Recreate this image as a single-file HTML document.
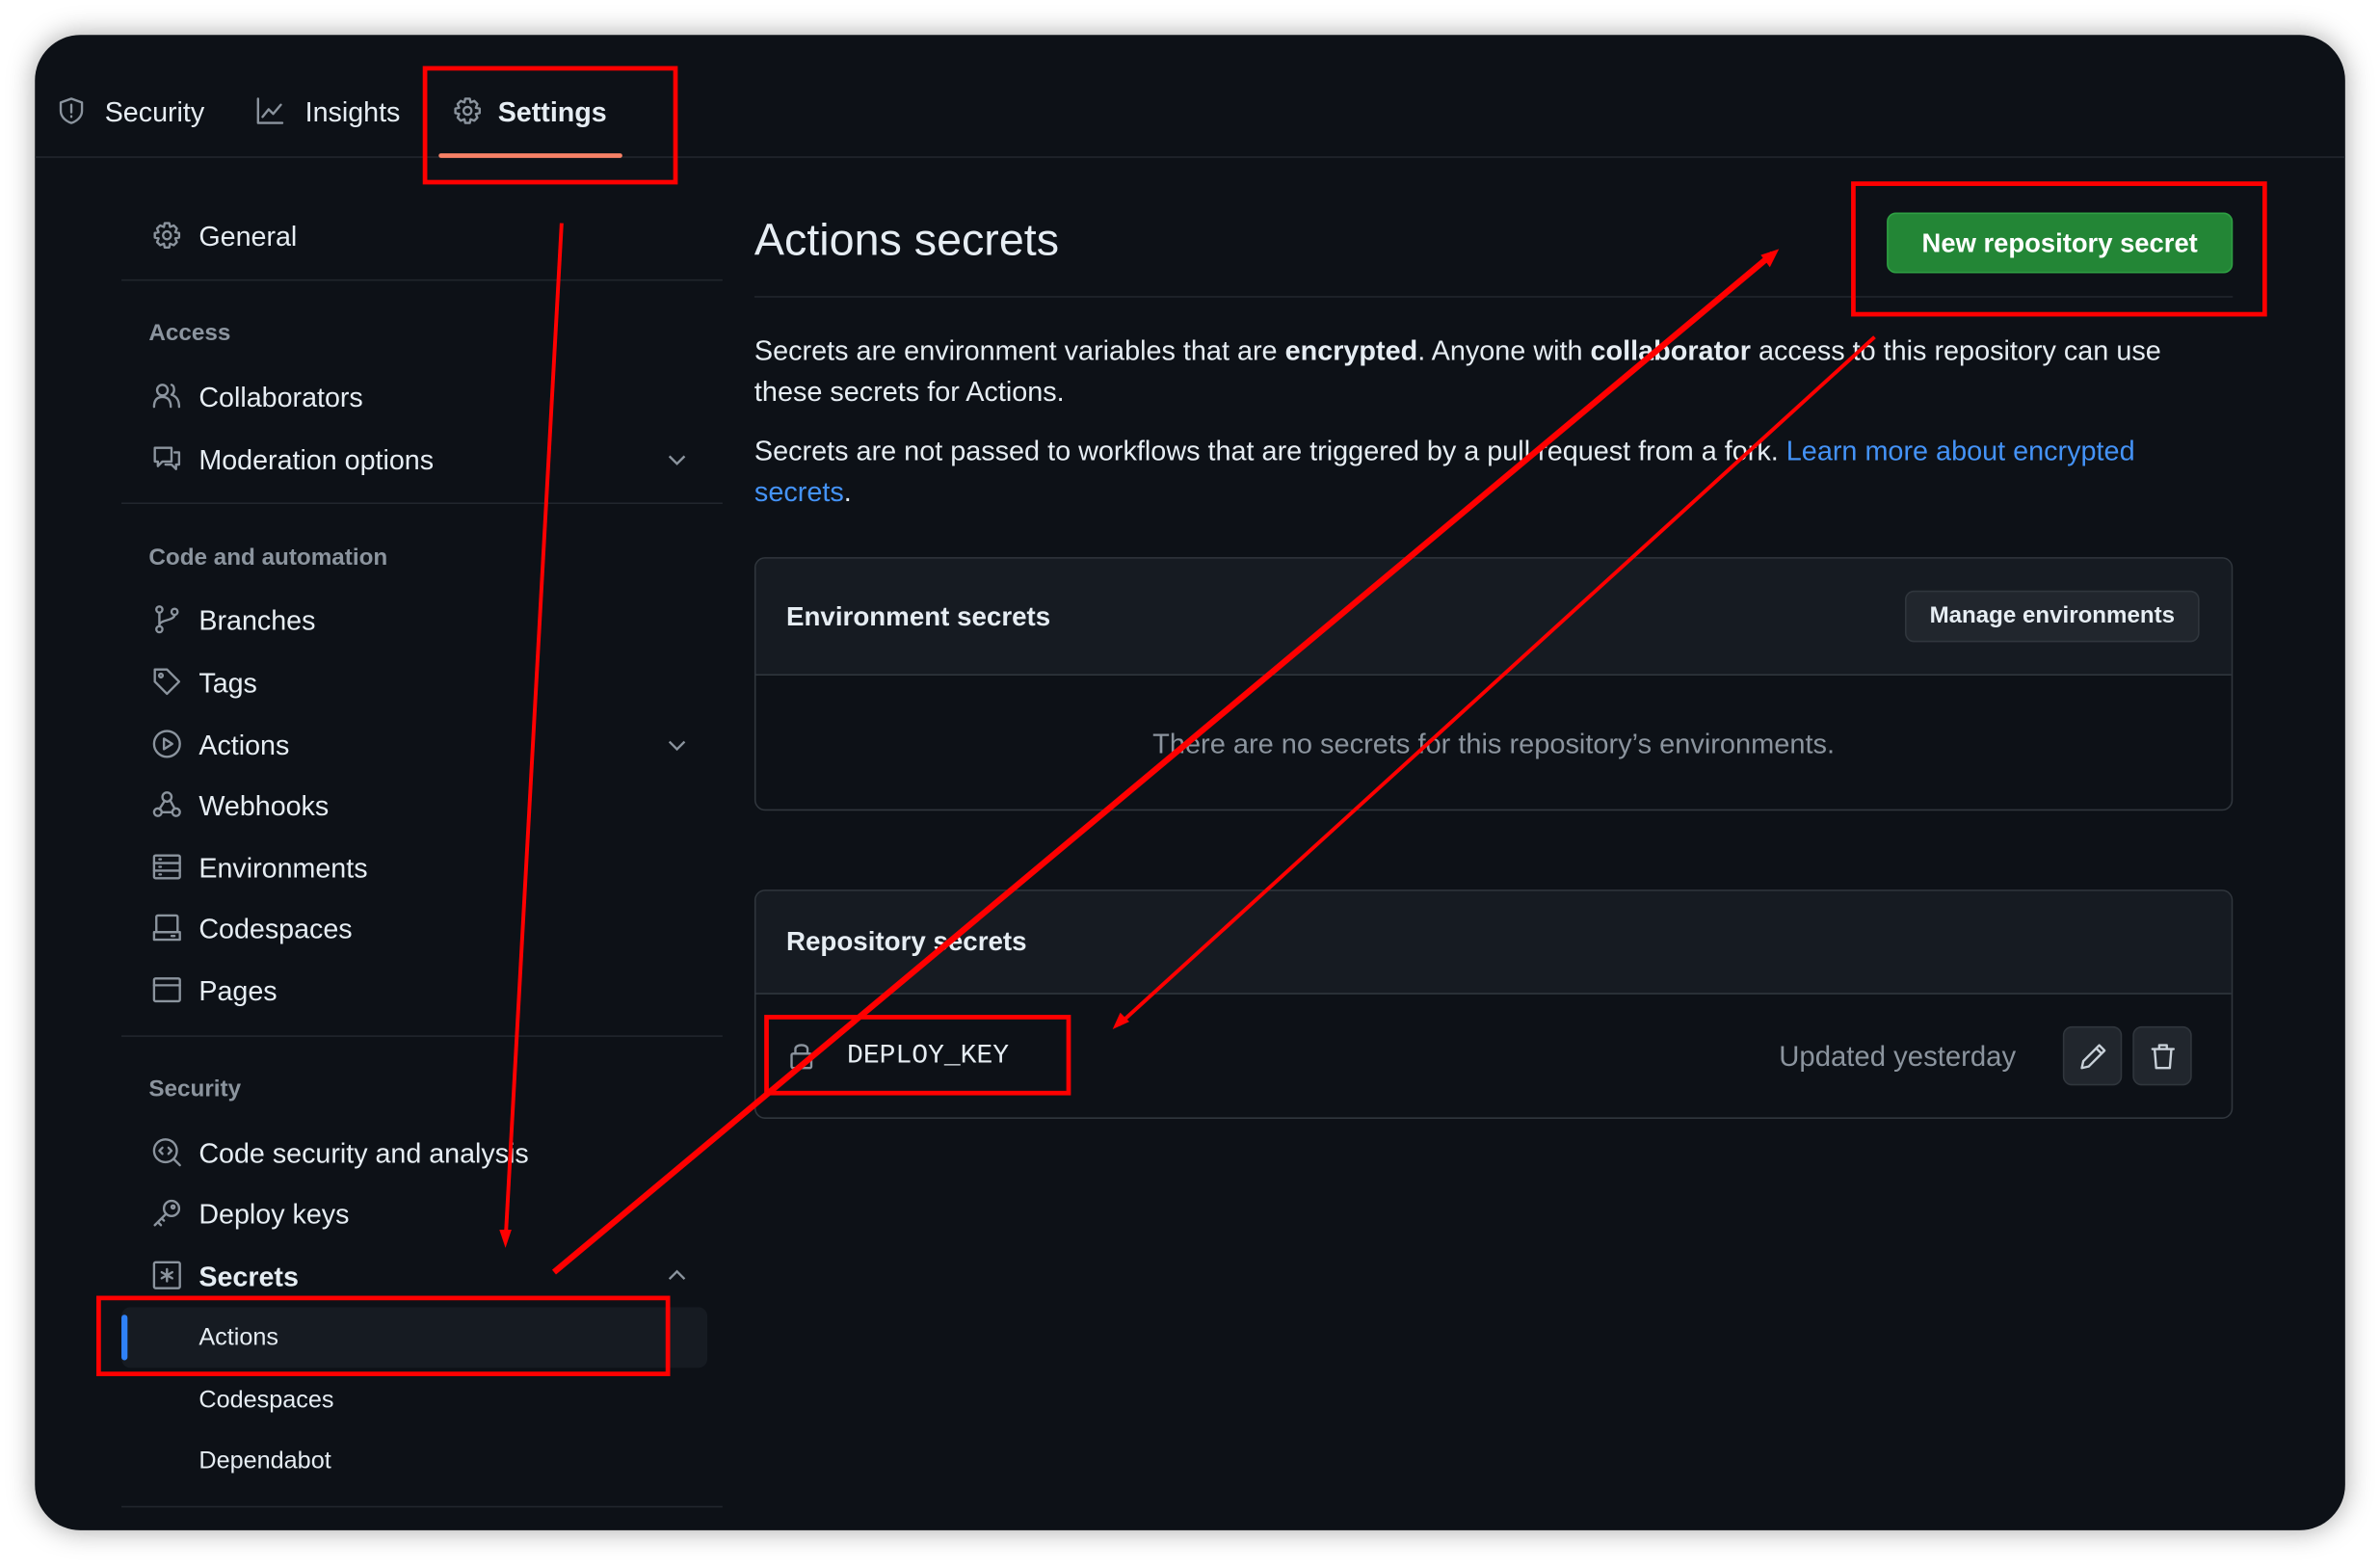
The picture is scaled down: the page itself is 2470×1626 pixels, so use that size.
<!DOCTYPE html>
<html><head><meta charset="utf-8"><style>
*{box-sizing:border-box;margin:0;padding:0}
html,body{width:2470px;height:1626px;background:#fff;overflow:hidden}
#s{position:absolute;left:0;top:0;width:1568px;height:1032px;transform:scale(1.5753);transform-origin:0 0;font-family:"Liberation Sans",sans-serif;color:#e6edf3}
.win{position:absolute;left:23px;top:23px;width:1522px;height:985px;background:#0d1117;border-radius:30px;box-shadow:0 0 18px rgba(0,0,0,.35);overflow:hidden}
.a{position:absolute;white-space:nowrap}
.t{font-size:18.2px;line-height:22px;color:#e6edf3}
.h{font-size:15.4px;color:#8b949e;font-weight:bold}
.div{position:absolute;height:1px;background:#21262d}
svg.i{position:absolute;width:20px;height:20px;fill:none;stroke:#8b949e;stroke-width:1.5;stroke-linecap:round;stroke-linejoin:round}
.chev{position:absolute;width:14px;height:14px}
</style></head><body><div id="s">
<div class="win"></div>
<svg class="i" style="left:37px;top:63px" viewBox="0 0 20 20"><path d="M10 2 L17 4.5 V10 C17 14 13.5 17 10 18 C6.5 17 3 14 3 10 V4.5 Z M10 6 V11 M10 13.5 V14"/></svg>
<div class="a t" style="left:69px;top:63px">Security</div>
<svg class="i" style="left:168px;top:63px" viewBox="0 0 20 20"><path d="M2 2 V18 H18 M5 14 L9 9 L12 12 L17 6"/></svg>
<div class="a t" style="left:201px;top:63px">Insights</div>
<svg class="i" style="left:298px;top:63px" viewBox="0 0 20 20"><circle cx="10" cy="10" r="2.6"/><path d="M8.5 2 H11.5 L12 4.5 L14.5 3.5 L16.5 5.5 L15.5 8 L18 8.5 V11.5 L15.5 12 L16.5 14.5 L14.5 16.5 L12 15.5 L11.5 18 H8.5 L8 15.5 L5.5 16.5 L3.5 14.5 L4.5 12 L2 11.5 V8.5 L4.5 8 L3.5 5.5 L5.5 3.5 L8 4.5 Z"/></svg>
<div class="a t" style="left:328px;top:63px;font-weight:bold">Settings</div>
<div class="div" style="left:23px;top:103px;width:1522px"></div>
<div class="a" style="left:289px;top:101px;width:121px;height:3px;background:#f78166;border-radius:2px"></div>

<svg class="i" style="left:100px;top:145px" viewBox="0 0 20 20"><circle cx="10" cy="10" r="2.6"/><path d="M8.5 2 H11.5 L12 4.5 L14.5 3.5 L16.5 5.5 L15.5 8 L18 8.5 V11.5 L15.5 12 L16.5 14.5 L14.5 16.5 L12 15.5 L11.5 18 H8.5 L8 15.5 L5.5 16.5 L3.5 14.5 L4.5 12 L2 11.5 V8.5 L4.5 8 L3.5 5.5 L5.5 3.5 L8 4.5 Z"/></svg>
<div class="a t" style="left:131px;top:145px">General</div>
<div class="div" style="left:80px;top:184px;width:396px"></div>
<div class="a h" style="left:98px;top:211px">Access</div>
<svg class="i" style="left:100px;top:251px" viewBox="0 0 20 20"><circle cx="7" cy="6" r="3.5"/><path d="M1.5 17 C1.5 12 4 10.5 7 10.5 C10 10.5 12.5 12 12.5 17 M13 2.5 C15 3 15.5 7.5 13 9 C16 10 18 12 18 17"/></svg>
<div class="a t" style="left:131px;top:251px">Collaborators</div>
<svg class="i" style="left:100px;top:292px" viewBox="0 0 20 20"><path d="M2 3 H13 V12 H7 L4 15 V12 H2 Z M15 6 H18 V14 H16 V17 L13 14 H9"/></svg>
<div class="a t" style="left:131px;top:292px">Moderation options</div>
<svg class="chev" style="left:439px;top:296px" viewBox="0 0 14 14"><path d="M2 4.5 L7 9.5 L12 4.5" stroke="#8b949e" stroke-width="1.5" fill="none"/></svg>
<div class="div" style="left:80px;top:331px;width:396px"></div>
<div class="a h" style="left:98px;top:359px">Code and automation</div>
<svg class="i" style="left:100px;top:398px" viewBox="0 0 20 20"><circle cx="5" cy="3.5" r="2"/><circle cx="5" cy="16.5" r="2"/><circle cx="15" cy="5" r="2"/><path d="M5 5.5 V14.5 M15 7 C15 11 5 10 5 14"/></svg>
<div class="a t" style="left:131px;top:398px">Branches</div>
<svg class="i" style="left:100px;top:439px" viewBox="0 0 20 20"><path d="M2 2 H10 L18 10 L10 18 L2 10 Z"/><circle cx="6" cy="6" r="1.2"/></svg>
<div class="a t" style="left:131px;top:439px">Tags</div>
<svg class="i" style="left:100px;top:480px" viewBox="0 0 20 20"><circle cx="10" cy="10" r="8.5"/><path d="M8 6.5 L13.5 10 L8 13.5 Z"/></svg>
<div class="a t" style="left:131px;top:480px">Actions</div>
<svg class="chev" style="left:439px;top:484px" viewBox="0 0 14 14"><path d="M2 4.5 L7 9.5 L12 4.5" stroke="#8b949e" stroke-width="1.5" fill="none"/></svg>
<svg class="i" style="left:100px;top:520px" viewBox="0 0 20 20"><circle cx="10" cy="5" r="3"/><circle cx="4" cy="15" r="2.5"/><circle cx="16" cy="15" r="2.5"/><path d="M8.5 7.5 L5 13 M12 7 L15 12.5 M6.5 15 H13.5"/></svg>
<div class="a t" style="left:131px;top:520px">Webhooks</div>
<svg class="i" style="left:100px;top:561px" viewBox="0 0 20 20"><rect x="1.5" y="2.5" width="17" height="15" rx="1"/><path d="M1.5 7.5 H18.5 M1.5 12.5 H18.5 M5 5 H6 M5 10 H6 M5 15 H6"/></svg>
<div class="a t" style="left:131px;top:561px">Environments</div>
<svg class="i" style="left:100px;top:601px" viewBox="0 0 20 20"><rect x="3" y="2" width="14" height="11" rx="1"/><path d="M1.5 13 H18.5 V18 H1.5 Z M13 15.5 H15"/></svg>
<div class="a t" style="left:131px;top:601px">Codespaces</div>
<svg class="i" style="left:100px;top:642px" viewBox="0 0 20 20"><rect x="1.5" y="2.5" width="17" height="15" rx="1"/><path d="M1.5 7 H18.5"/></svg>
<div class="a t" style="left:131px;top:642px">Pages</div>
<div class="div" style="left:80px;top:682px;width:396px"></div>
<div class="a h" style="left:98px;top:709px">Security</div>
<svg class="i" style="left:100px;top:749px" viewBox="0 0 20 20"><circle cx="9" cy="9" r="7.5"/><path d="M14.5 14.5 L18.5 18.5 M7 7 L5 9 L7 11 M11 7 L13 9 L11 11"/></svg>
<div class="a t" style="left:131px;top:749px">Code security and analysis</div>
<svg class="i" style="left:100px;top:789px" viewBox="0 0 20 20"><circle cx="13" cy="7" r="5"/><path d="M9.5 10.5 L2 18 M4 16 L6 18 M6.5 13.5 L8 15"/><circle cx="14" cy="6" r="1"/></svg>
<div class="a t" style="left:131px;top:789px">Deploy keys</div>
<svg class="i" style="left:100px;top:830px" viewBox="0 0 20 20"><rect x="1.5" y="1.5" width="17" height="17" rx="1"/><path d="M10 6 V14 M6.5 8 L13.5 12 M13.5 8 L6.5 12"/></svg>
<div class="a t" style="left:131px;top:830px;font-weight:bold">Secrets</div>
<svg class="chev" style="left:439px;top:833px" viewBox="0 0 14 14"><path d="M2 9.5 L7 4.5 L12 9.5" stroke="#8b949e" stroke-width="1.5" fill="none"/></svg>
<div class="a" style="left:80px;top:861px;width:386px;height:40px;background:#161b22;border-radius:6px"></div>
<div class="a" style="left:80px;top:866px;width:4px;height:30px;background:#2f81f7;border-radius:2px"></div>
<div class="a" style="left:131px;top:873px;font-size:16px">Actions</div>
<div class="a" style="left:131px;top:914px;font-size:16px">Codespaces</div>
<div class="a" style="left:131px;top:954px;font-size:16px">Dependabot</div>
<div class="div" style="left:80px;top:992px;width:396px"></div>

<div class="a" style="left:497px;top:142px;font-size:29.6px;color:#e6edf3">Actions secrets</div>
<div class="div" style="left:497px;top:195px;width:974px"></div>
<div class="a" style="left:1243px;top:140px;width:228px;height:40px;background:#238636;border:1px solid #2ea043;border-radius:6px;color:#fff;font-weight:bold;font-size:17.4px;text-align:center;line-height:38px">New repository secret</div>
<div class="a" style="left:497px;top:217px;width:945px;white-space:normal;font-size:18.3px;line-height:27px;color:#e6edf3">Secrets are environment variables that are <b>encrypted</b>. Anyone with <b>collaborator</b> access to this repository can use these secrets for Actions.</div>
<div class="a" style="left:497px;top:283px;width:945px;white-space:normal;font-size:18.3px;line-height:27px;color:#e6edf3">Secrets are not passed to workflows that are triggered by a pull request from a fork. <span style="color:#4493f8">Learn more about encrypted secrets</span>.</div>

<div class="a" style="left:497px;top:367px;width:974px;height:167px;border:1px solid #30363d;border-radius:7px;overflow:hidden">
 <div style="height:77px;background:#161b22;border-bottom:1px solid #30363d"></div>
</div>
<div class="a" style="left:518px;top:396px;font-size:17.6px;font-weight:bold">Environment secrets</div>
<div class="a" style="left:1255px;top:389px;width:194px;height:34px;background:#21262d;border:1px solid #30363d;border-radius:6px;text-align:center;line-height:32px;font-size:15.3px;font-weight:bold;color:#e6edf3">Manage environments</div>
<div class="a" style="left:497px;top:479px;width:974px;text-align:center;font-size:18.4px;color:#8b949e">There are no secrets for this repository’s environments.</div>

<div class="a" style="left:497px;top:586px;width:974px;height:151px;border:1px solid #30363d;border-radius:7px;overflow:hidden">
 <div style="height:68px;background:#161b22;border-bottom:1px solid #30363d"></div>
</div>
<div class="a" style="left:518px;top:610px;font-size:17.6px;font-weight:bold">Repository secrets</div>
<svg class="i" style="left:518px;top:685px" viewBox="0 0 20 20"><rect x="3.5" y="9" width="13" height="9.5" rx="1"/><path d="M6 9 V6 C6 2.5 14 2.5 14 6 V9"/></svg>
<div class="a" style="left:558px;top:686px;font-family:'Liberation Mono',monospace;font-size:17.8px">DEPLOY_KEY</div>
<div class="a" style="left:1172px;top:685px;font-size:18.6px;color:#8b949e">Updated yesterday</div>
<div class="a" style="left:1359px;top:676px;width:39px;height:39px;background:#21262d;border:1px solid #30363d;border-radius:6px"></div>
<div class="a" style="left:1405px;top:676px;width:39px;height:39px;background:#21262d;border:1px solid #30363d;border-radius:6px"></div>
<svg class="i" style="left:1369px;top:686px;stroke:#c9d1d9" viewBox="0 0 20 20"><path d="M14 2.5 L17.5 6 L7 16.5 L2.5 17.5 L3.5 13 Z M12 4.5 L15.5 8"/></svg>
<svg class="i" style="left:1415px;top:686px;stroke:#c9d1d9" viewBox="0 0 20 20"><path d="M3 5 H17 M7.5 5 V2.5 H12.5 V5 M4.5 5 L5.5 17.5 H14.5 L15.5 5"/></svg>

<svg class="a" style="left:0;top:0" width="1568" height="1032" viewBox="0 0 1568 1032">
<g fill="none" stroke="#ff0000" stroke-width="3">
<rect x="280" y="45" width="165" height="75"/>
<rect x="1221" y="121" width="271" height="86"/>
<rect x="65" y="855" width="375" height="50"/>
<rect x="505" y="670" width="199" height="50"/>
</g>
<g stroke="#ff0000" fill="none">
<path d="M370 147 L333 818" stroke-width="2.5"/>
<path d="M365 838 L1168 167" stroke-width="4"/>
<path d="M1235 222 L737 675" stroke-width="2.5"/>
</g>
<g fill="#ff0000">
<path d="M333 822 L329 810 L337 810 Z"/>
<path d="M1172 164 L1160 168 L1166 176 Z"/>
<path d="M733 678 L738 667 L744 673 Z"/>
</g>
</svg>
</div></body></html>
